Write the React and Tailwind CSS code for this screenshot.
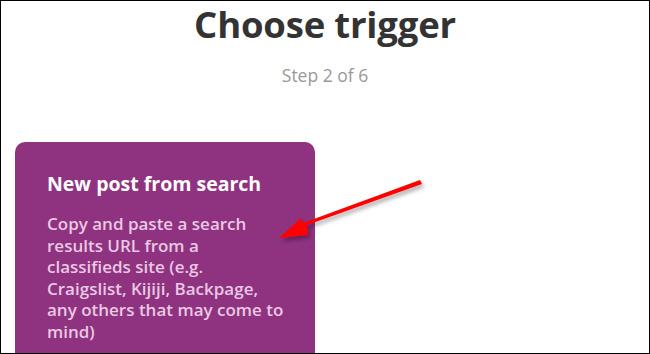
export default function App() {
  return (
    <div className="relative w-[650px] h-[354px] overflow-hidden bg-white border border-black" style={{ fontFamily: '"Open Sans", Lato, sans-serif' }}>
      <div className="flex flex-col items-center">
        <h1 className="text-[36.5px] leading-[46px] font-bold text-[#333333] tracking-[-0.2px]">Choose trigger</h1>
        <p className="mt-[17px] text-[17.5px] leading-[22px] text-[#999999]">Step 2 of 6</p>
      </div>
      <div className="ml-[14px] mt-[56px] w-[300px] h-[260px] rounded-t-[10px] bg-[#8f3380] pl-[32px] pr-[29px] pt-[29px]">
        <h2 className="text-[19.5px] leading-[26px] font-bold text-white">New post from search</h2>
        <p className="mt-[16px] text-[17px] leading-[21.6px] font-semibold text-[#e9c8e3]">
          Copy and paste a search results URL from a classifieds site (e.g. Craigslist, Kijiji, Backpage, any others that may come to mind)
        </p>
      </div>
      <svg className="absolute left-0 top-0" width="650" height="354" viewBox="0 0 650 354">
        <defs>
          <filter id="sh" x="-20%" y="-50%" width="140%" height="200%">
            <feDropShadow dx="2" dy="3" stdDeviation="2" floodColor="#000" floodOpacity="0.35" />
          </filter>
        </defs>
        <polygon filter="url(#sh)" fill="#ff0000" points="419,179 421,183 306,224 307,234 278,237 300,217 302,222" />
      </svg>
    </div>
  );
}
